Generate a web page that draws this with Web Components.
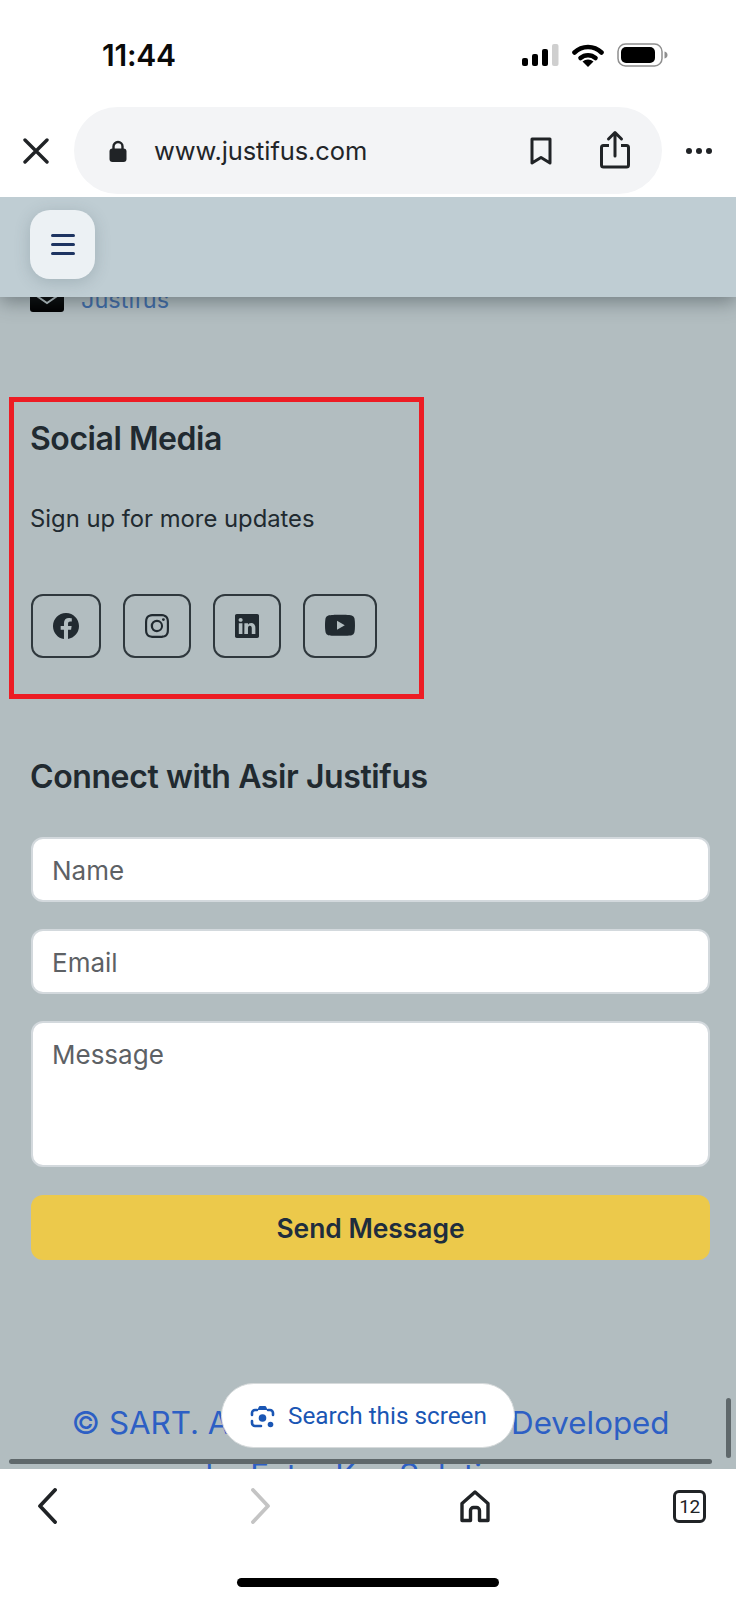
<!DOCTYPE html>
<html lang="en">
<head>
<meta charset="utf-8">
<title>justifus.com</title>
<style>
  html, body { margin: 0; padding: 0; background: #fff; }
  body { font-family: Inter, "Liberation Sans", sans-serif; width: 736px; height: 1600px; overflow: hidden; }
</style>
</head>
<body>
<phone-status></phone-status>
<browser-bar></browser-bar>
<web-view>
  <contact-line>Justifus</contact-line>
  <social-section></social-section>
  <contact-form></contact-form>
  <site-footer></site-footer>
</web-view>
<browser-toolbar></browser-toolbar>

<script>
class PhoneStatus extends HTMLElement {
  constructor() {
    super();
    this.shadowDOM = this.attachShadow({ mode: 'open' });
  }

  connectedCallback() {
    this.shadowDOM.innerHTML = `
    <style>
      :host { display: flex; align-items: center; height: 104px; padding: 3px 68px 0 102px; box-sizing: content-box; width: 566px; }
      .time { font: 600 30px Inter, sans-serif; color: #0a0a0a; letter-spacing: -.2px; flex: 1; }
      .icons { display: flex; align-items: center; gap: 13px; }
    </style>
    <span class="time">11:44</span>
    <div class="icons">
      <svg width="37" height="24" viewBox="0 0 37 24">
        <rect x="0" y="15" width="6" height="8" rx="2" fill="#000"/>
        <rect x="10" y="11" width="6" height="12" rx="2" fill="#000"/>
        <rect x="20" y="6" width="6" height="17" rx="2" fill="#000"/>
        <rect x="30" y="1" width="6.500" height="22" rx="2" fill="#cfcfcf"/>
      </svg>
      <svg width="32" height="23" viewBox="0 0 32 23">
        <path d="M2.500 8.500a19.500 19.500 0 0 1 27 0" fill="none" stroke="#000" stroke-width="4.600" stroke-linecap="round"/>
        <path d="M8.500 14a11.500 11.500 0 0 1 15 0" fill="none" stroke="#000" stroke-width="4.600" stroke-linecap="round"/>
        <path d="M10.500 17.500a8.500 8.500 0 0 1 11 0L16 23z" fill="#000"/>
      </svg>
      <svg width="51" height="24" viewBox="0 0 51 24">
        <rect x="1" y="1" width="44" height="22" rx="7.500" fill="none" stroke="#8f8f8f" stroke-width="1.500"/>
        <rect x="4" y="4" width="34" height="16" rx="5" fill="#000"/>
        <path d="M47.500 8.500c2 .5 3 1.800 3 3.500s-1 3-3 3.500z" fill="#8f8f8f"/>
      </svg>
    </div>
    `;
  }
}

class BrowserBar extends HTMLElement {
  constructor() {
    super();
    this.shadowDOM = this.attachShadow({ mode: 'open' });
  }

  connectedCallback() {
    this.shadowDOM.innerHTML = `
    <style>
      :host { display: flex; align-items: flex-start; height: 90px; padding-left: 23px; }
      .close { width: 26px; height: 26px; margin: 31px 25px 0 0; flex: none; }
      .url-bar { display: flex; align-items: center; width: 588px; height: 87px; border-radius: 44px; background: #f3f4f6; box-sizing: border-box; padding: 0 32px 0 35px; flex: none; }
      .lock { width: 18px; height: 22px; margin-right: 27px; flex: none; }
      .url { flex: 1; font: 400 25.500px Inter, sans-serif; color: #222528; letter-spacing: -.1px; }
      .mark { width: 22px; height: 28px; margin-right: 48px; flex: none; }
      .share { width: 30px; height: 39px; flex: none; margin-bottom: 2px; }
      .dots { width: 28px; height: 8px; margin: 40px 0 0 23px; flex: none; }
    </style>
    <svg class="close" viewBox="0 0 26 26"><path d="M2 2l22 22M24 2L2 24" stroke="#202326" stroke-width="3.400" stroke-linecap="round"/></svg>
    <div class="url-bar">
      <svg class="lock" viewBox="0 0 18 22">
        <path d="M4.500 10V6.500a4.500 4.500 0 0 1 9 0V10" fill="none" stroke="#202326" stroke-width="2.400"/>
        <rect x="0.500" y="8.500" width="17" height="13.500" rx="3" fill="#202326"/>
      </svg>
      <span class="url">www.justifus.com</span>
      <svg class="mark" viewBox="0 0 22 28"><path d="M2 2h18v24l-9-5.500L2 26z" fill="none" stroke="#202326" stroke-width="3" stroke-linejoin="round"/></svg>
      <svg class="share" viewBox="0 0 30 39">
        <path d="M9 15.500H3.500a2 2 0 0 0-2 2V35a2 2 0 0 0 2 2h23a2 2 0 0 0 2-2V17.500a2 2 0 0 0-2-2H21" fill="none" stroke="#202326" stroke-width="3"/>
        <path d="M15 26V3M8.500 9L15 2.500 21.500 9" fill="none" stroke="#202326" stroke-width="3" stroke-linecap="round" stroke-linejoin="round"/>
      </svg>
    </div>
    <svg class="dots" viewBox="0 0 28 8"><circle cx="4" cy="4" r="3" fill="#202326"/><circle cx="14" cy="4" r="3" fill="#202326"/><circle cx="24" cy="4" r="3" fill="#202326"/></svg>
    `;
  }
}

class SiteHeader extends HTMLElement {
  constructor() {
    super();
    this.shadowDOM = this.attachShadow({ mode: 'open' });
  }

  connectedCallback() {
    this.shadowDOM.innerHTML = `
    <style>
      :host { display: flex; position: absolute; left: 0; top: 0; right: 0; height: 100px; background: #bfcdd3; box-shadow: 0 5px 18px rgba(40, 50, 55, .45); padding: 13px 0 0 30px; box-sizing: border-box; z-index: 5; }
      button { width: 65px; height: 69px; border: 0; border-radius: 20px; background: #ecf1f4; box-shadow: 0 3px 16px rgba(60, 80, 90, .22); display: flex; flex-direction: column; align-items: center; justify-content: center; gap: 5.500px; padding: 0; }
      i { display: block; width: 24px; height: 3.500px; border-radius: 2px; background: #1d3461; }
    </style>
    <button aria-label="Menu"><i></i><i></i><i></i></button>
    `;
  }
}

class WebView extends HTMLElement {
  constructor() {
    super();
    this.shadowDOM = this.attachShadow({ mode: 'open' });
  }

  connectedCallback() {
    this.shadowDOM.innerHTML = `
    <style>
      :host { display: block; position: relative; height: 1272px; overflow: hidden; background: #b2bdc0; color: #212a30; }
      .page { display: flex; flex-direction: column; padding-top: 91px; }
      .hbar { position: absolute; left: 9px; top: 1262px; width: 703px; height: 5px; border-radius: 3px; background: #5f686b; z-index: 4; }
      .vbar { position: absolute; left: 726px; top: 1201px; width: 5px; height: 60px; border-radius: 3px; background: #5f686b; z-index: 4; }
      .lens-pill { position: absolute; left: 221px; top: 1186px; width: 294px; height: 65px; box-sizing: border-box; border-radius: 33px; background: #fff; border: 1.500px solid #d6dadb; display: flex; align-items: center; gap: 13px; padding-left: 28px; z-index: 4; color: #1a56b4; font: 400 24.300px Roboto, sans-serif; }
      .lens-pill svg { width: 25px; height: 25px; flex: none; margin-top: 1px; }
    </style>
    <site-header></site-header>
    <div class="page"><slot></slot></div>
    <div class="hbar"></div>
    <div class="vbar"></div>
    <div class="lens-pill">
      <svg viewBox="0 0 25 25">
        <path d="M7 6H5a3 3 0 0 0-3 3v2M2 17v2a3 3 0 0 0 3 3h6M23 11V9a3 3 0 0 0-3-3h-2" fill="none" stroke="#1a56b4" stroke-width="2.600" stroke-linecap="round"/>
        <path d="M7.500 6l1.200-3a1.500 1.500 0 0 1 1.400-1h4.800a1.500 1.500 0 0 1 1.400 1l1.200 3z" fill="#1a56b4"/>
        <circle cx="12.500" cy="14" r="3.800" fill="#1a56b4"/>
        <circle cx="20.500" cy="20.500" r="2.800" fill="#1a56b4"/>
      </svg>
      <span>Search this screen</span>
    </div>
    `;
  }
}

class ContactLine extends HTMLElement {
  constructor() {
    super();
    this.shadowDOM = this.attachShadow({ mode: 'open' });
  }

  connectedCallback() {
    this.shadowDOM.innerHTML = `
    <style>
      :host { display: flex; align-items: flex-end; gap: 17px; height: 24px; margin-left: 30px; font: 400 23.500px/24px Inter, sans-serif; color: #3f6ba8; }
      svg { width: 34px; height: 24px; flex: none; }
      span { display: block; }
    </style>
    <svg viewBox="0 0 34 24">
      <rect width="34" height="24" rx="3" fill="#000"/>
      <path d="M1 4l16 11L33 4" fill="none" stroke="#b8c3c6" stroke-width="2"/>
    </svg>
    <span><slot></slot></span>
    `;
  }
}

class SocialLink extends HTMLElement {
  constructor() {
    super();
    this.shadowDOM = this.attachShadow({ mode: 'open' });
  }

  connectedCallback() {
    const icon = SocialLink.icons[this.getAttribute('icon')];
    this.shadowDOM.innerHTML = `
    <style>
      :host { display: inline-flex; align-items: center; justify-content: center; height: 64px; padding: 0 20px; box-sizing: border-box; border: 2px solid #2f383d; border-radius: 12px; color: #212a30; }
      svg { display: block; fill: currentColor; }
    </style>
    <svg width="${icon.w}" height="${icon.h}" viewBox="${icon.box}"><path d="${icon.d}"/></svg>
    `;
  }
}

SocialLink.icons = {
  facebook: { w: 26, h: 26, box: '0 0 16 16', d: 'M16 8.049c0-4.446-3.582-8.05-8-8.05C3.58 0-.002 3.603-.002 8.05c0 4.017 2.926 7.347 6.75 7.951v-5.625h-2.03V8.05H6.75V6.275c0-2.017 1.195-3.131 3.022-3.131.876 0 1.791.157 1.791.157v1.98h-1.009c-.993 0-1.303.621-1.303 1.258v1.51h2.218l-.354 2.326H9.25V16c3.824-.604 6.75-3.934 6.75-7.951' },
  instagram: { w: 24, h: 24, box: '0 0 16 16', d: 'M8 0C5.829 0 5.556.01 4.703.048 3.85.088 3.269.222 2.76.42a3.9 3.9 0 0 0-1.417.923A3.9 3.9 0 0 0 .42 2.76C.222 3.268.087 3.85.048 4.7.01 5.555 0 5.827 0 8.001c0 2.172.01 2.444.048 3.297.04.852.174 1.433.372 1.942.205.526.478.972.923 1.417.444.445.89.719 1.416.923.51.198 1.09.333 1.942.372C5.555 15.99 5.827 16 8 16s2.444-.01 3.298-.048c.851-.04 1.434-.174 1.943-.372a3.9 3.9 0 0 0 1.416-.923c.445-.445.718-.891.923-1.417.197-.509.332-1.09.372-1.942C15.99 10.445 16 10.173 16 8s-.01-2.445-.048-3.299c-.04-.851-.175-1.433-.372-1.941a3.9 3.9 0 0 0-.923-1.417A3.9 3.9 0 0 0 13.24.42c-.51-.198-1.092-.333-1.943-.372C10.443.01 10.172 0 7.998 0zm-.717 1.442h.718c2.136 0 2.389.007 3.232.046.78.035 1.204.166 1.486.275.373.145.64.319.92.599s.453.546.598.92c.11.281.24.705.275 1.485.039.843.047 1.096.047 3.231s-.008 2.389-.047 3.232c-.035.78-.166 1.203-.275 1.485a2.5 2.5 0 0 1-.599.919c-.28.28-.546.453-.92.598-.28.11-.704.24-1.485.276-.843.038-1.096.047-3.232.047s-2.39-.009-3.233-.047c-.78-.036-1.203-.166-1.485-.276a2.5 2.5 0 0 1-.92-.598 2.5 2.5 0 0 1-.6-.92c-.109-.281-.24-.705-.275-1.485-.038-.843-.046-1.096-.046-3.233s.008-2.388.046-3.231c.036-.78.166-1.204.276-1.486.145-.373.319-.64.599-.92s.546-.453.92-.598c.282-.11.705-.24 1.485-.276.738-.034 1.024-.044 2.515-.045zm4.988 1.328a.96.96 0 1 0 0 1.92.96.96 0 0 0 0-1.92m-4.27 1.122a4.109 4.109 0 1 0 0 8.217 4.109 4.109 0 0 0 0-8.217m0 1.441a2.667 2.667 0 1 1 0 5.334 2.667 2.667 0 0 1 0-5.334' },
  linkedin: { w: 24, h: 24, box: '0 0 16 16', d: 'M0 1.146C0 .513.526 0 1.175 0h13.65C15.474 0 16 .513 16 1.146v13.708c0 .633-.526 1.146-1.175 1.146H1.175C.526 16 0 15.487 0 14.854zm4.943 12.248V6.169H2.542v7.225zm-1.2-8.212c.837 0 1.358-.554 1.358-1.248-.015-.709-.52-1.248-1.342-1.248S2.4 3.226 2.4 3.934c0 .694.521 1.248 1.327 1.248zm4.908 8.212V9.359c0-.216.016-.432.08-.586.173-.431.568-.878 1.232-.878.869 0 1.216.662 1.216 1.634v3.865h2.401V9.25c0-2.22-1.184-3.252-2.764-3.252-1.274 0-1.845.7-2.165 1.193v.025h-.016l.016-.025V6.169h-2.4c.03.678 0 7.225 0 7.225z' },
  youtube: { w: 30, h: 30, box: '0 0 16 16', d: 'M8.051 1.999h.089c.822.003 4.987.033 6.11.335a2.01 2.01 0 0 1 1.415 1.42c.101.38.172.883.22 1.402l.01.104.022.26.008.104c.065.914.073 1.77.074 1.957v.075c-.001.194-.01 1.108-.082 2.06l-.008.105-.009.104c-.05.572-.124 1.14-.235 1.558a2.01 2.01 0 0 1-1.415 1.42c-1.16.312-5.569.334-6.18.335h-.142c-.309 0-1.587-.006-2.927-.052l-.17-.006-.087-.004-.171-.007-.171-.007c-1.11-.049-2.167-.128-2.654-.26a2.01 2.01 0 0 1-1.415-1.419c-.111-.417-.185-.986-.235-1.558L.09 9.82l-.008-.104A31 31 0 0 1 0 7.68v-.123c.002-.215.01-.958.064-1.778l.007-.103.003-.052.008-.104.022-.26.01-.104c.048-.519.119-1.023.22-1.402a2.01 2.01 0 0 1 1.415-1.42c.487-.13 1.544-.21 2.654-.26l.17-.007.172-.006.086-.003.171-.007A100 100 0 0 1 7.858 2zM6.4 5.209v4.818l4.157-2.408z' }
};

class SocialSection extends HTMLElement {
  constructor() {
    super();
    this.shadowDOM = this.attachShadow({ mode: 'open' });
  }

  connectedCallback() {
    this.shadowDOM.innerHTML = `
    <style>
      :host { display: block; width: 415px; height: 302px; box-sizing: border-box; margin: 85px 0 0 9px; border: 5px solid #ed1c24; padding: 18px 0 0 17px; }
      h2 { margin: 0 0 0 -1px; font: 600 32px/38px Inter, sans-serif; letter-spacing: -.45px; }
      p { margin: 46px 0 0 -1px; font: 400 23.800px/30px Inter, sans-serif; }
      .links { display: flex; gap: 22px; margin-top: 60px; }
    </style>
    <h2>Social Media</h2>
    <p>Sign up for more updates</p>
    <div class="links">
      <social-link icon="facebook"></social-link>
      <social-link icon="instagram"></social-link>
      <social-link icon="linkedin"></social-link>
      <social-link icon="youtube"></social-link>
    </div>
    `;
  }
}

class ContactForm extends HTMLElement {
  constructor() {
    super();
    this.shadowDOM = this.attachShadow({ mode: 'open' });
  }

  connectedCallback() {
    this.shadowDOM.innerHTML = `
    <style>
      :host { display: block; margin: 59px 26px 0 31px; }
      h2 { margin: 0 0 41px -1px; font: 600 32px/38px Inter, sans-serif; letter-spacing: -.4px; }
      form { display: flex; flex-direction: column; gap: 27px; }
      input, textarea { display: block; width: 100%; box-sizing: border-box; margin: 0; background: #fff; border: 2px solid #d3d9dd; border-radius: 12px; padding: 0 19px; font: 400 26px Inter, sans-serif; color: #212a30; outline: none; resize: none; }
      input { height: 65px; padding-top: 1px; }
      textarea { height: 146px; padding-top: 14px; line-height: 36px; }
      ::placeholder { color: #5d6165; opacity: 1; }
      button { height: 65px; margin-top: 1px; border: 0; border-radius: 12px; background: #ecc94b; color: #1f2d3d; font: 600 26.400px Inter, sans-serif; padding: 0; }
    </style>
    <h2>Connect with Asir Justifus</h2>
    <form>
      <input type="text" placeholder="Name">
      <input type="email" placeholder="Email">
      <textarea placeholder="Message"></textarea>
      <button type="button">Send Message</button>
    </form>
    `;
  }
}

class SiteFooter extends HTMLElement {
  constructor() {
    super();
    this.shadowDOM = this.attachShadow({ mode: 'open' });
  }

  connectedCallback() {
    this.shadowDOM.innerHTML = `
    <style>
      :host { display: block; margin: 137px 26px 0 31px; text-align: center; font: 400 31.300px/52px Inter, sans-serif; color: #2d5fc4; }
    </style>
    © SART. All Rights Reserved. Developed<br>by Extra Key Solutions
    `;
  }
}

class BrowserToolbar extends HTMLElement {
  constructor() {
    super();
    this.shadowDOM = this.attachShadow({ mode: 'open' });
  }

  connectedCallback() {
    this.shadowDOM.innerHTML = `
    <style>
      :host { display: block; position: relative; height: 131px; background: #fff; }
      .tools { display: grid; grid-template-columns: 214px 209px 213px auto; align-items: center; padding: 19px 0 0 37px; height: 36px; }
      .tools svg { display: block; }
      .tabs { width: 33px; height: 33px; box-sizing: border-box; border: 3.500px solid #202326; border-radius: 6px; display: flex; align-items: center; justify-content: center; font: 400 19px Roboto, sans-serif; color: #202326; letter-spacing: -.5px; }
      .home-bar { position: absolute; left: 237px; top: 109px; width: 262px; height: 9px; border-radius: 5px; background: #000; }
    </style>
    <div class="tools">
      <svg width="20" height="36" viewBox="0 0 20 36"><path d="M18 2L3 18l15 16" fill="none" stroke="#202326" stroke-width="3.800" stroke-linecap="round" stroke-linejoin="round"/></svg>
      <svg width="20" height="36" viewBox="0 0 20 36"><path d="M2 2l15 16L2 34" fill="none" stroke="#c4c4c4" stroke-width="3.800" stroke-linecap="round" stroke-linejoin="round"/></svg>
      <svg width="30" height="33" viewBox="0 0 30 33"><path d="M2 30.500V13.500L15 2l13 11.500v17h-8.500V20.500a3 3 0 0 0-3-3h-3a3 3 0 0 0-3 3v10z" fill="none" stroke="#202326" stroke-width="3.400" stroke-linejoin="round"/></svg>
      <div class="tabs">12</div>
    </div>
    <div class="home-bar"></div>
    `;
  }
}

customElements.define('phone-status', PhoneStatus);
customElements.define('browser-bar', BrowserBar);
customElements.define('site-header', SiteHeader);
customElements.define('web-view', WebView);
customElements.define('contact-line', ContactLine);
customElements.define('social-link', SocialLink);
customElements.define('social-section', SocialSection);
customElements.define('contact-form', ContactForm);
customElements.define('site-footer', SiteFooter);
customElements.define('browser-toolbar', BrowserToolbar);
</script>
</body>
</html>
